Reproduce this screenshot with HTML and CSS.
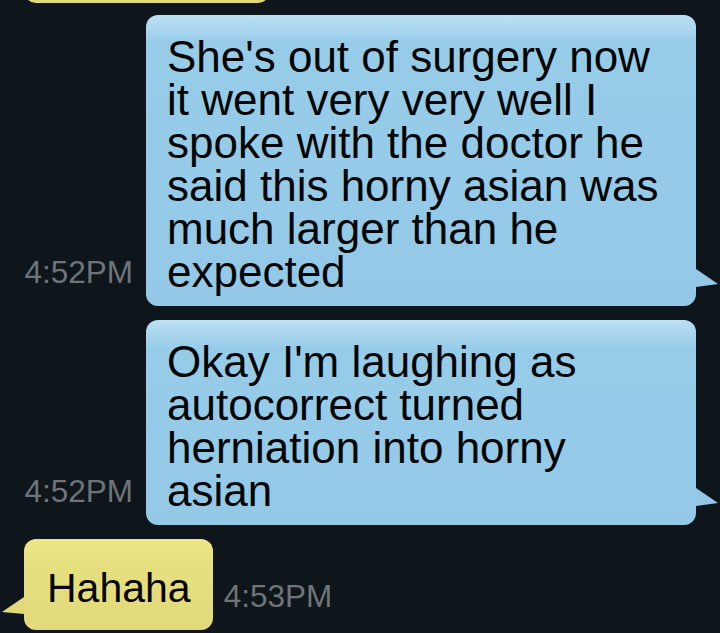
FILE: index.html
```html
<!DOCTYPE html>
<html lang="en">
<head>
  <meta charset="UTF-8">
  <meta name="viewport" content="width=device-width, initial-scale=1.0">
  <title>Messages</title>
  <link rel="stylesheet" href="styles.css">
</head>
<body>
  <div class="thread">
    <!-- previous message, scrolled off the top -->
    <div class="msg received cut">
      <div class="bubble"></div>
    </div>

    <div class="msg sent">
      <span class="time">4:52PM</span>
      <div class="bubble">She's out of surgery now it went very very well I spoke with the doctor he said this horny asian was much larger than he expected</div>
    </div>

    <div class="msg sent">
      <span class="time">4:52PM</span>
      <div class="bubble">Okay I'm laughing as autocorrect turned herniation into horny asian</div>
    </div>

    <div class="msg received">
      <div class="bubble">Hahaha</div>
      <span class="time">4:53PM</span>
    </div>
  </div>
</body>
</html>
```

FILE: styles.css
```css
/* Global styles */
* {
  margin: 0;
  padding: 0;
  box-sizing: border-box;
}

body {
  font-family: 'Liberation Sans', Arial, sans-serif;
  background-color: #0e151b;
  color: #050505;
  overflow: hidden;
}

.thread {
  display: flex;
  flex-direction: column;
  gap: 14px;
}

.msg {
  display: flex;
  align-items: flex-end;
}

.time {
  font-size: 31.5px;
  color: #6f7478;
  margin-bottom: 15px;
  white-space: nowrap;
}

.bubble {
  position: relative;
  border-radius: 12px;
  font-size: 44px;
  line-height: 43px;
}

/* sent (blue, right side) */
.msg.sent {
  justify-content: flex-end;
  gap: 13px;
  padding-right: 24px;
}

.msg.sent .bubble {
  width: 550px;
  padding: 20px 29px 13px 21px;
  background: linear-gradient(#bde0f4 0, #97cce9 28px, #93c9e7 100%);
}

.msg.sent .bubble::after {
  content: '';
  position: absolute;
  right: -22px;
  bottom: 19px;
  width: 22px;
  height: 18px;
  background-color: #93c9e7;
  clip-path: polygon(0 0, 100% 83%, 0 100%);
}

/* received (yellow, left side) */
.msg.received {
  gap: 11px;
  padding-left: 24px;
}

.msg.received .bubble {
  padding: 28px 22px 20px 23px;
  font-size: 41px;
  background: linear-gradient(#ede887 0, #e6df7f 28px, #e2da7a 100%);
}

.msg.received .bubble::after {
  content: '';
  position: absolute;
  left: -22px;
  bottom: 16px;
  width: 22px;
  height: 17px;
  background-color: #e2da7a;
  clip-path: polygon(100% 0, 0 88%, 100% 100%);
}

.msg.cut {
  margin-top: -77px;
  margin-bottom: -2px;
}

.msg.cut .bubble {
  width: 246px;
  height: 80px;
}

.msg.cut .bubble::after {
  display: none;
}
```
